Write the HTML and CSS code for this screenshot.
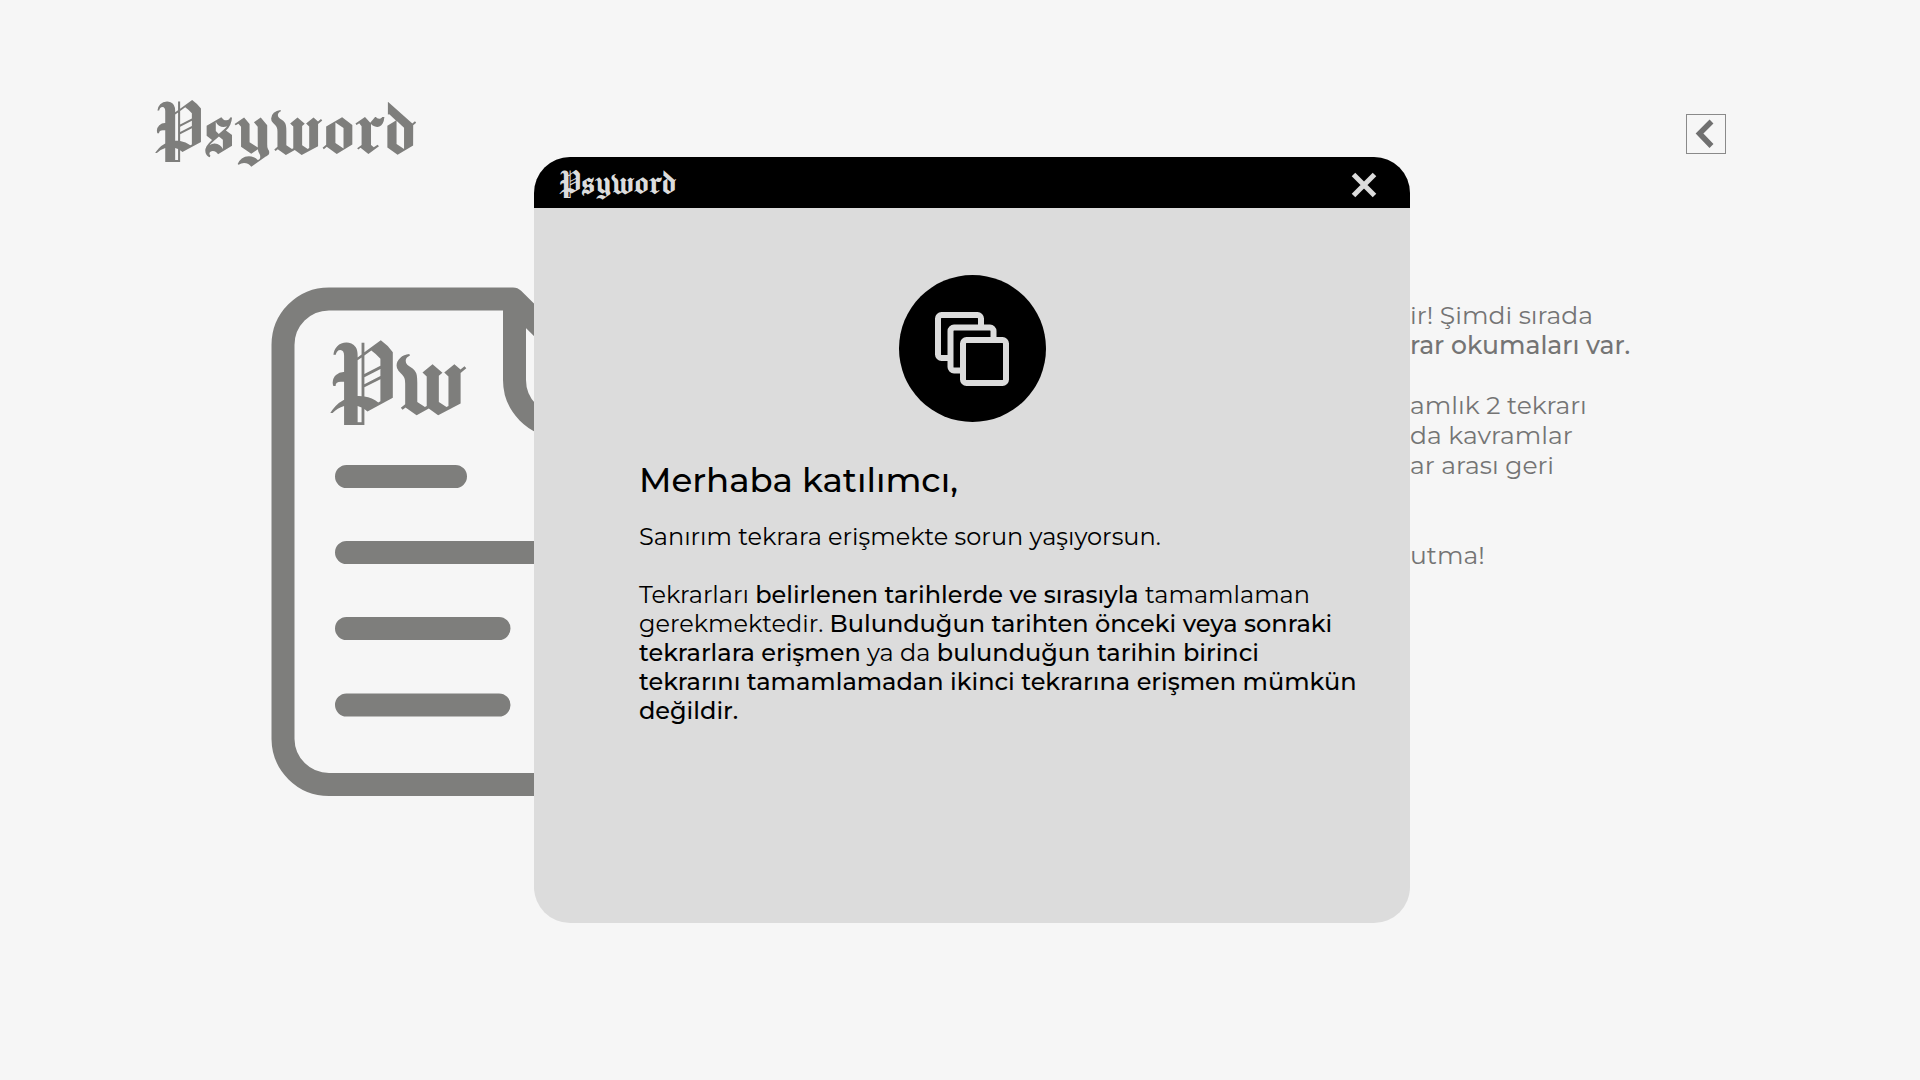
FILE: index.html
```html
<!DOCTYPE html>
<html lang="tr">
<head>
<meta charset="utf-8">
<meta name="viewport" content="width=device-width, initial-scale=1">
<title>Psyword</title>
<link rel="stylesheet" href="styles.css">
</head>
<body>
<div class="page">
  <header class="page-header">
    <a class="logo" href="#">Psyword</a>
    <button class="back" type="button" aria-label="Geri">
      <svg width="38" height="38" viewBox="0 0 38 38" aria-hidden="true"><path d="M24.500 6.500 12.500 18.500 24.500 31" fill="none" stroke="currentColor" stroke-width="5.500"/></svg>
    </button>
  </header>
  <main class="content">
    <svg class="document" width="384" height="510" viewBox="0 0 384 510" aria-hidden="true">
      <g fill="none" stroke="currentColor" stroke-width="23" stroke-linejoin="round">
        <path d="M242 12H58A46 46 0 0 0 12 58V452A46 46 0 0 0 58 497.500H324A46 46 0 0 0 370 452V139Z"/>
        <path d="M243.500 12V93A46 46 0 0 0 289 139H370"/>
        <g stroke-linecap="round">
          <path d="M75.500 189.500H184.500M75.500 265.500H308M75.500 341.500H228M75.500 418H228"/>
        </g>
      </g>
      <text class="document-mark" x="55" y="127">Pw</text>
    </svg>
    <div class="intro">
      <p>ir! Şimdi sırada<br><strong>rar okumaları var.</strong></p>
      <p>amlık 2 tekrarı<br>da kavramlar<br>ar arası geri</p>
      <p class="reminder">utma!</p>
    </div>
  </main>
</div>
<div class="overlay">
  <section class="modal" role="dialog" aria-labelledby="modal-title">
    <header class="modal-header">
      <span class="modal-logo">Psyword</span>
      <button class="close" type="button" aria-label="Kapat">
        <svg width="26" height="26" viewBox="0 0 26 26" aria-hidden="true"><path d="M2.500 2.500 23.500 23.500M23.500 2.500 2.500 23.500" stroke="currentColor" stroke-width="5"/></svg>
      </button>
    </header>
    <div class="modal-body">
      <svg class="badge" width="147" height="147" viewBox="0 0 147 147" aria-hidden="true">
        <circle cx="73.500" cy="73.500" r="73.500" fill="#000"/>
        <g fill="#000" stroke="#dcdcdc" stroke-width="6">
          <rect x="39" y="40" width="43" height="43" rx="3.500"/>
          <rect x="51.500" y="52.500" width="43" height="43" rx="3.500"/>
          <rect x="64" y="65" width="43" height="43" rx="3.500"/>
        </g>
      </svg>
      <h1 id="modal-title">Merhaba katılımcı,</h1>
      <p>Sanırım tekrara erişmekte sorun yaşıyorsun.</p>
      <p>Tekrarları <strong>belirlenen tarihlerde ve sırasıyla</strong> tamamlaman<br>gerekmektedir. <strong>Bulunduğun tarihten önceki veya sonraki<br>tekrarlara erişmen</strong> ya da <strong>bulunduğun tarihin birinci<br>tekrarını tamamlamadan ikinci tekrarına erişmen mümkün<br>değildir.</strong></p>
    </div>
  </section>
</div>
</body>
</html>
```
FILE: styles.css
```css
:root {
  --blackletter: "Manufacturing Consent", UnifrakturCook, "Liberation Serif", serif;
}

* { box-sizing: border-box; }

body {
  margin: 0;
  background: #f6f6f6;
  color: #000;
  font-family: Montserrat, Inter, "Open Sans", sans-serif;
}

h1, p { margin: 0; }
strong { font-weight: 500; }

button {
  display: grid;
  place-items: center;
  padding: 0;
  background: none;
  cursor: pointer;
}

.page { min-height: 100vh; color: #7e7e7c; }

.page-header {
  display: flex;
  align-items: center;
  justify-content: space-between;
  padding: 85px 194px 0 152px;
}

.logo {
  padding-bottom: 14px;
  color: inherit;
  font: 85px/84px var(--blackletter);
  text-decoration: none;
}

.back {
  width: 40px;
  height: 40px;
  border: 1px solid #8a8a8a;
  color: #707070;
}

.content {
  display: grid;
  grid-template-columns: 1139fr 510fr;
  align-items: start;
  padding: 104px 0 0 271px;
}

.document-mark {
  fill: currentColor;
  font: 116px var(--blackletter);
}

.intro {
  display: grid;
  gap: 30px;
  padding-top: 13px;
  color: #747474;
  font-size: 25px;
  line-height: 30px;
}

.reminder { padding-top: 30px; }

.overlay {
  position: fixed;
  inset: 0;
  display: flex;
  align-items: flex-start;
  justify-content: center;
  padding: 157px 0 0 24px;
  overflow: auto;
}

.modal {
  width: 100%;
  max-width: 876px;
  overflow: hidden;
  border-radius: 36px;
  background: #dcdcdc;
}

.modal-header {
  display: flex;
  align-items: center;
  justify-content: space-between;
  padding: 0 33px 0 24px;
  background: #000;
  color: #dcdcdc;
}

.modal-logo { font: 38px/51px var(--blackletter); }

.close { padding-top: 5px; border: 0; color: inherit; }

.modal-body {
  display: flex;
  flex-direction: column;
  gap: 29px;
  padding: 67px 40px 198px 105px;
  font-size: 24px;
  line-height: 29px;
}

.badge { align-self: center; margin-right: 65px; }

h1 {
  margin: 8px 0 -8px;
  font-size: 34px;
  font-weight: 500;
  line-height: 42px;
}
```
